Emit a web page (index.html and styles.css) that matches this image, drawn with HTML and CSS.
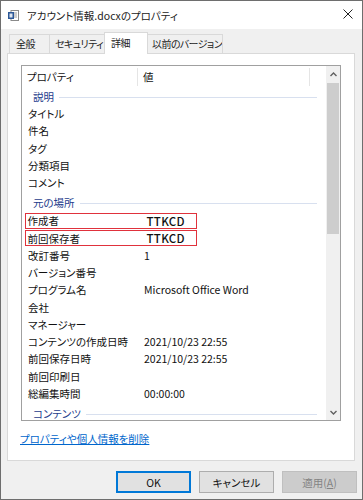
FILE: index.html
```html
<!DOCTYPE html>
<html lang="ja">
<head>
    <meta charset="UTF-8">
    <title>アカウント情報.docxのプロパティ</title>
    <link rel="stylesheet" href="styles.css">
</head>
<body>
    <div class="window">
        <div class="titlebar">
            <svg class="doc-icon" width="11" height="11" viewBox="0 0 11 11">
                <rect x="3" y="0.5" width="7.5" height="10" fill="#fff" stroke="#8a8a8a"/>
                <line x1="6" y1="3" x2="9" y2="3" stroke="#9a9a9a"/>
                <line x1="6" y1="5" x2="9" y2="5" stroke="#9a9a9a"/>
                <line x1="6" y1="7" x2="9" y2="7" stroke="#9a9a9a"/>
                <rect x="0" y="2" width="6" height="7" fill="#2b5797"/>
                <rect x="1.5" y="3.5" width="3" height="4" fill="#fff" opacity="0.85"/>
            </svg>
            <span class="title">アカウント情報.docxのプロパティ</span>
            <svg class="close" width="10" height="10" viewBox="0 0 10 10">
                <path d="M0.5 0.5 L9.5 9.5 M9.5 0.5 L0.5 9.5" stroke="#222" stroke-width="1"/>
            </svg>
        </div>

        <div class="body">
            <div class="tabs">
                <div class="tab t1">全般</div>
                <div class="tab t2">セキュリティ</div>
                <div class="tab t3 active">詳細</div>
                <div class="tab t4">以前のバージョン</div>
            </div>

            <div class="panel">
                <div class="list">
                    <div class="list-main">
                        <div class="header">
                            <div class="hcol hname">プロパティ</div>
                            <div class="hcol hval">値</div>
                            <div class="hcol hrest"></div>
                        </div>

                        <div class="group first"><span>説明</span><i></i></div>
                        <div class="row"><span class="name">タイトル</span></div>
                        <div class="row"><span class="name">件名</span></div>
                        <div class="row"><span class="name">タグ</span></div>
                        <div class="row"><span class="name">分類項目</span></div>
                        <div class="row"><span class="name">コメント</span></div>

                        <div class="group"><span>元の場所</span><i></i></div>
                        <div class="row">
                            <div class="mark">
                                <span class="name">作成者</span>
                                <span class="val big">TTKCD</span>
                            </div>
                        </div>
                        <div class="row">
                            <div class="mark">
                                <span class="name">前回保存者</span>
                                <span class="val big">TTKCD</span>
                            </div>
                        </div>
                        <div class="row"><span class="name">改訂番号</span><span class="val">1</span></div>
                        <div class="row"><span class="name">バージョン番号</span></div>
                        <div class="row"><span class="name">プログラム名</span><span class="val">Microsoft Office Word</span></div>
                        <div class="row"><span class="name">会社</span></div>
                        <div class="row"><span class="name">マネージャー</span></div>
                        <div class="row"><span class="name">コンテンツの作成日時</span><span class="val">2021/10/23 22:55</span></div>
                        <div class="row"><span class="name">前回保存日時</span><span class="val">2021/10/23 22:55</span></div>
                        <div class="row"><span class="name">前回印刷日</span></div>
                        <div class="row"><span class="name">総編集時間</span><span class="val">00:00:00</span></div>

                        <div class="group"><span>コンテンツ</span><i></i></div>
                    </div>

                    <div class="scrollbar">
                        <div class="arrow">
                            <svg width="7" height="5" viewBox="0 0 7 5"><path d="M0.5 4 L3.5 1 L6.5 4" fill="none" stroke="#606060" stroke-width="1.4"/></svg>
                        </div>
                        <div class="track"><div class="thumb"></div></div>
                        <div class="arrow">
                            <svg width="7" height="5" viewBox="0 0 7 5"><path d="M0.5 1 L3.5 4 L6.5 1" fill="none" stroke="#606060" stroke-width="1.4"/></svg>
                        </div>
                    </div>
                </div>

                <a class="remove-link" href="#">プロパティや個人情報を削除</a>
            </div>

            <div class="buttons">
                <button class="btn default">OK</button>
                <button class="btn">キャンセル</button>
                <button class="btn disabled">適用(<u>A</u>)</button>
            </div>
        </div>
    </div>
</body>
</html>
```

FILE: styles.css
```css
body {
    margin: 0;
    background: #3a3a3a;
    font-family: "Noto Sans CJK JP", "Noto Sans", sans-serif;
    font-size: 10.5px;
    font-feature-settings: "palt";
    color: #111;
}

.window {
    width: 363px;
    height: 500px;
    box-sizing: border-box;
    border: 1px solid #6e6e6e;
    background: #f0f0f0;
    display: flex;
    flex-direction: column;
}

/* title bar */
.titlebar {
    height: 28px;
    background: #fff;
    display: flex;
    align-items: center;
    padding: 0 0 0 7px;
}

.doc-icon {
    margin-right: 8px;
}

.title {
    flex: 1;
    font-size: 10.5px;
    color: #222;
}

.close {
    margin-right: 9px;
    margin-top: -2px;
}

/* tabs */
.body {
    flex: 1;
    display: flex;
    flex-direction: column;
}

.tabs {
    display: flex;
    align-items: flex-end;
    height: 24px;
    padding-left: 7px;
}

.tab {
    box-sizing: border-box;
    height: 19px;
    line-height: 17px;
    border: 1px solid #d9d9d9;
    border-bottom: none;
    background: #f0f0f0;
    margin-left: -1px;
    padding-left: 6px;
    white-space: nowrap;
    overflow: hidden;
    font-size: 10px;
    letter-spacing: -0.6px;
    color: #222;
}

.t1 { width: 41px; margin-left: 1px; }
.t2 { width: 56px; padding-left: 5px; }
.t3 { width: 44px; }
.t4 { width: 76px; padding-left: 4px; }

.tab.active {
    height: 22px;
    line-height: 20px;
    background: #fff;
    position: relative;
    margin-bottom: -1px;
    z-index: 1;
}

/* content panel */
.panel {
    margin-left: 6px;
    width: 348px;
    height: 408px;
    box-sizing: border-box;
    border: 1px solid #d9d9d9;
    background: #fff;
    padding: 11px 0 0 13px;
}

.list {
    width: 320px;
    height: 356px;
    box-sizing: border-box;
    border: 1px solid #a0a0a0;
    display: flex;
    overflow: hidden;
}

.list-main {
    flex: 1;
    overflow: hidden;
}

.header {
    display: flex;
    height: 22px;
    line-height: 22px;
}

.hcol {
    box-sizing: border-box;
    border-right: 1px solid #e5e5e5;
    height: 18px;
    margin-top: 2px;
    line-height: 18px;
}

.hname {
    width: 116px;
    padding-left: 5px;
}

.hval {
    width: 172px;
    padding-left: 5px;
}

.hrest {
    width: 16px;
    border-right: none;
}

.group {
    height: 21px;
    display: flex;
    align-items: center;
    padding: 2px 0 0 11px;
    box-sizing: border-box;
    color: #1e3c8c;
}

.group.first {
    height: 17px;
    padding-top: 0;
}

.group i {
    flex: 1;
    height: 1px;
    background: #d8e0ef;
    margin: 1px 9px 0 5px;
}

.row {
    height: 17.25px;
    display: flex;
    align-items: center;
    padding-left: 6px;
}

.name {
    width: 116px;
    flex-shrink: 0;
}

.val {
    white-space: nowrap;
}

.mark {
    display: flex;
    align-items: center;
    box-sizing: border-box;
    width: 172px;
    height: 16px;
    margin-left: -3px;
    padding-left: 1.5px;
    border: 1.5px solid #e0323c;
}

.mark .name {
    width: 117px;
}

.val.big {
    font-size: 11.5px;
    font-weight: 500;
    letter-spacing: 0.3px;
    margin-left: 2px;
}

/* scrollbar */
.scrollbar {
    width: 14px;
    background: #f0f0f0;
    display: flex;
    flex-direction: column;
}

.arrow {
    height: 16px;
    display: flex;
    align-items: center;
    justify-content: center;
}

.track {
    flex: 1;
}

.thumb {
    height: 151px;
    margin: 1px 1px 0;
    background: #cdcdcd;
}

.remove-link {
    display: inline-block;
    margin-top: 10px;
    margin-left: -1px;
    color: #0066cc;
    text-decoration: underline;
}

/* dialog buttons */
.buttons {
    display: flex;
    justify-content: flex-end;
    gap: 8px;
    padding: 10px 5px 0 0;
}

.btn {
    width: 75px;
    height: 22px;
    box-sizing: border-box;
    border: 1px solid #adadad;
    background: #e1e1e1;
    font-family: inherit;
    font-size: 10.5px;
    font-feature-settings: "palt";
    color: #111;
    padding: 0;
}

.btn.default {
    border: 2px solid #0078d7;
}

.btn.disabled {
    background: #cccccc;
    border-color: #bfbfbf;
    color: #838383;
}
```
